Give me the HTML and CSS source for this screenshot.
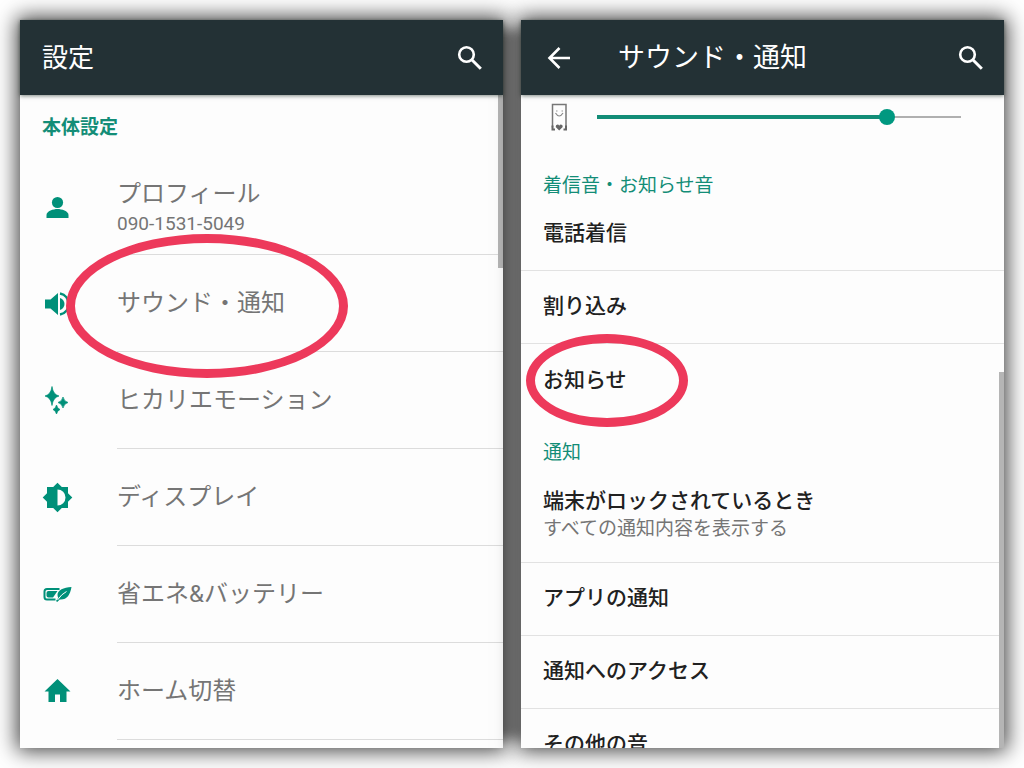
FILE: index.html
```
<!DOCTYPE html>
<html lang="ja">
<head>
  <meta charset="UTF-8" />
  <meta name="viewport" content="width=device-width, initial-scale=1" />
  <title>設定</title>
  <link rel="stylesheet" href="styles.css">
</head>

<body>
  <main class="screens">

    <!-- 設定 -->
    <section class="screen screen-settings">
      <header class="bar">
        <h1>設定</h1>
        <button class="icon-btn" type="button" aria-label="検索">
          <svg width="32" height="32" viewBox="0 0 32 32" fill="none" stroke="#fff" stroke-width="2.600"><circle cx="12.500" cy="12.500" r="7.300"/><path d="M17.800 17.800l9 9" stroke-width="3"/></svg>
        </button>
      </header>

      <div class="list">
        <h2 class="section-title bold">本体設定</h2>

        <a class="item" href="#">
          <span class="item-icon">
            <svg width="32" height="32" viewBox="0 0 32 32"><circle cx="15.500" cy="11.500" r="5.600"/><path d="M4.500 27v-3c0-4 7-6 11-6s11 2 11 6v3z"/></svg>
          </span>
          <span class="item-body">
            <span class="item-name">プロフィール</span>
            <span class="item-sub">090-1531-5049</span>
          </span>
        </a>

        <a class="item" href="#">
          <span class="item-icon">
            <svg width="32" height="32" viewBox="0 0 32 32"><path d="M3 11.500h5.500L16 5v22l-7.500-6.500H3z"/><path d="M18 10c3 1 4.500 3.500 4.500 6S21 21 18 22z"/><path d="M18 5.500c5.500 1 8.500 5.500 8.500 10.500S23.500 25.500 18 26.500" fill="none" stroke="#009079" stroke-width="2.500"/></svg>
          </span>
          <span class="item-body"><span class="item-name">サウンド・通知</span></span>
          <span class="mark mark-sound"></span>
        </a>

        <a class="item" href="#">
          <span class="item-icon">
            <svg width="32" height="32" viewBox="0 0 32 32"><path d="M10 1.500q1 8 7 9.500-6 1.500-7 9.500-1-8-7-9.500 6-1.500 7-9.500zM21 12q1 4.500 5 5.500-4 1-5 5.500-1-4.500-5-5.500 4-1 5-5.500zM14.500 20q.8 3.500 3.500 4.500-2.700 1-3.500 4.500-.8-3.500-3.500-4.500 2.700-1 3.500-4.500z" stroke="#009079" stroke-width=".7"/></svg>
          </span>
          <span class="item-body"><span class="item-name">ヒカリエモーション</span></span>
        </a>

        <a class="item" href="#">
          <span class="item-icon">
            <svg width="32" height="32" viewBox="0.500 0.500 32 32"><path fill-rule="evenodd" d="M16 1.300l4.300 4.200h6.200v6.200l4.300 4.300-4.300 4.300v6.200h-6.200L16 30.700l-4.300-4.200H5.500v-6.200L1.200 16l4.300-4.300V5.500h6.200zM16 8v16a8 8 0 0 0 0-16z"/></svg>
          </span>
          <span class="item-body"><span class="item-name">ディスプレイ</span></span>
        </a>

        <a class="item" href="#">
          <span class="item-icon">
            <svg width="32" height="32" viewBox="0.500 1 32 32"><path d="M18 11H5.500Q3 11 3 13.500v5.500q0 2.500 2.500 2.500H14" fill="none" stroke="#009079" stroke-width="2"/><path d="M7 13h9l-4.500 6.500H7Q5 19.500 5 17.500V15q0-2 2-2z"/><path d="M30 9c-8 .5-14 3-14 8 0 1 .3 2 .8 2.800L14.500 23l1.200 1 2.600-2.500C25.500 22 28.500 17 30 9z"/><path d="M16 22q4-6 9-8.500" fill="none" stroke="#fff" stroke-width="1"/></svg>
          </span>
          <span class="item-body"><span class="item-name">省エネ&amp;バッテリー</span></span>
        </a>

        <a class="item" href="#">
          <span class="item-icon">
            <svg width="32" height="32" viewBox="0.500 1.500 32 32"><path d="M16 4.500L3 17h4v10.500h6.500V20h5v7.500H25V17h4z"/></svg>
          </span>
          <span class="item-body"><span class="item-name">ホーム切替</span></span>
        </a>
      </div>
      <span class="scrollbar"></span>
    </section>

    <!-- サウンド・通知 -->
    <section class="screen screen-sound">
      <header class="bar">
        <button class="icon-btn" type="button" aria-label="戻る">
          <svg width="32" height="32" viewBox="0 0 32 32" fill="none" stroke="#fff" stroke-width="2.600"><path d="M27 16H7M16.500 6L6.500 16l10 10"/></svg>
        </button>
        <h1>サウンド・通知</h1>
        <button class="icon-btn" type="button" aria-label="検索">
          <svg width="32" height="32" viewBox="0 0 32 32" fill="none" stroke="#fff" stroke-width="2.600"><circle cx="12.500" cy="12.500" r="7.300"/><path d="M17.800 17.800l9 9" stroke-width="3"/></svg>
        </button>
      </header>

      <div class="list">
        <div class="volume">
          <label for="volume" aria-label="音量">
            <svg width="32" height="32" viewBox="0 0 32 32" fill="none" stroke="#777" stroke-width="1.500"><path d="M9.500 26.500V3.500h13.500v23"/><path d="M12.500 12q3.700 6 7.500 0" stroke="#888" stroke-width="1.200"/><path d="M13 10h1.500M18.500 10h1.500" stroke="#999" stroke-width="1.200"/><path d="M16.200 29.500l-3.500-3.500q-.2-2.500 1.800-2.500 1.300 0 1.700 1.200.5-1.200 1.800-1.200 2 0 1.700 2.500z" fill="#666" stroke="none"/><path d="M9.500 24.500v4h2.500M23 24.500v4h-2.500" stroke="#666" stroke-width="2"/></svg>
          </label>
          <input type="range" id="volume" min="0" max="100" value="81">
        </div>

        <h2 class="section-title">着信音・お知らせ音</h2>
        <a class="item" href="#"><span class="item-name">電話着信</span></a>
        <a class="item" href="#"><span class="item-name">割り込み</span></a>
        <a class="item last" href="#">
          <span class="item-name">お知らせ</span>
          <span class="mark mark-notice"></span>
        </a>

        <h2 class="section-title">通知</h2>
        <a class="item two-line" href="#">
          <span class="item-name">端末がロックされているとき</span>
          <span class="item-sub">すべての通知内容を表示する</span>
        </a>
        <a class="item" href="#"><span class="item-name">アプリの通知</span></a>
        <a class="item" href="#"><span class="item-name">通知へのアクセス</span></a>
        <a class="item" href="#"><span class="item-name">その他の音</span></a>
      </div>
      <span class="scrollbar"></span>
    </section>

  </main>
</body>
</html>
```

FILE: styles.css
```
* {
  box-sizing: border-box;
}

body {
  margin: 0;
  background: #fff;
  font-family: Roboto, "Noto Sans CJK JP", sans-serif;
  color: #212121;
}

h1, h2 {
  margin: 0;
}

a {
  color: inherit;
  text-decoration: none;
}

.screens {
  display: flex;
  gap: 18px;
  height: 100vh;
  padding: 20px;
  overflow: hidden;
}

.screen {
  position: relative;
  flex: 1;
  min-width: 0;
  display: flex;
  flex-direction: column;
  background: #fdfdfd;
  box-shadow: 0 0 20px 3px rgba(0, 0, 0, 0.75);
}

/* 画面の間は影を濃くする */
.screen-settings {
  box-shadow: 0 0 20px 3px rgba(0, 0, 0, 0.75), 30px 0 10px -10px rgba(0, 0, 0, 0.35);
}

/* ヘッダー */
.bar {
  position: relative;
  z-index: 1;
  flex: none;
  display: flex;
  align-items: center;
  height: 75px;
  padding: 0 17px 0 22px;
  background: #233135;
  color: #fff;
  box-shadow: 0 1px 4px rgba(0, 20, 10, 0.5);
}

.bar h1 {
  flex: 1;
  font-size: 26px;
  font-weight: 400;
  line-height: 32px;
}

.screen-sound .bar h1 {
  padding-left: 43px;
  font-size: 27px;
}

.icon-btn {
  width: 32px;
  height: 32px;
  padding: 0;
  border: none;
  background: none;
  cursor: pointer;
}

svg {
  display: block;
}

/* リスト */
.list {
  flex: 1;
  min-height: 0;
  overflow: hidden;
}

.section-title {
  padding: 24px 22px 0;
  font-size: 19px;
  font-weight: 400;
  line-height: 24px;
  color: #138d77;
}

.section-title.bold {
  padding: 21px 22px 18px;
  font-weight: 700;
}

.item {
  position: relative;
  display: flex;
}

.item-name,
.item-sub {
  display: block;
}

.item-sub {
  font-size: 19px;
  line-height: 24px;
  color: #757575;
}

.screen-settings .item {
  height: 97px;
  padding-left: 22px;
}

.item-icon {
  flex: none;
  width: 75px;
  align-self: center;
  fill: #009079;
}

.item-body {
  flex: 1;
  display: flex;
  flex-direction: column;
  justify-content: center;
  border-bottom: 1px solid #dcdcdc;
}

.screen-settings .item-name {
  font-size: 24px;
  line-height: 36px;
  color: #757575;
}

.screen-sound .item {
  flex-direction: column;
  justify-content: center;
  height: 73px;
  padding: 0 22px 2px;
  border-bottom: 1px solid #e2e2e2;
}

.screen-sound .item.two-line {
  height: 98px;
}

.screen-sound .item.last {
  border-bottom: none;
}

.screen-sound .item-name {
  font-size: 21px;
  font-weight: 500;
  line-height: 32px;
}

/* 音量スライダー */
.volume {
  display: flex;
  align-items: center;
  gap: 22px;
  height: 55px;
  padding: 0 43px 11px 22px;
}

.volume input {
  flex: 1;
  min-width: 0;
  height: 16px;
  margin: 0;
  -webkit-appearance: none;
  appearance: none;
  background:
    linear-gradient(#138d77, #138d77) left center / 80% 4px no-repeat,
    linear-gradient(#b0b0b0, #b0b0b0) left center / 100% 2px no-repeat;
}

.volume input::-webkit-slider-thumb {
  -webkit-appearance: none;
  width: 16px;
  height: 16px;
  border-radius: 50%;
  background: #009880;
}

/* 赤い丸印 */
.mark {
  position: absolute;
  z-index: 1;
  border: 9px solid #ed395b;
  border-radius: 50%;
  pointer-events: none;
}

.mark-sound {
  top: -21px;
  left: 46px;
  width: 282px;
  height: 144px;
}

.mark-notice {
  top: -10px;
  left: 5px;
  width: 162px;
  height: 93px;
}

/* スクロールバー */
.scrollbar {
  position: absolute;
  right: 0;
  width: 5px;
  background: #b5b5b5;
}

.screen-settings .scrollbar {
  top: 75px;
  height: 173px;
}

.screen-sound .scrollbar {
  top: 352px;
  bottom: 0;
}
```
